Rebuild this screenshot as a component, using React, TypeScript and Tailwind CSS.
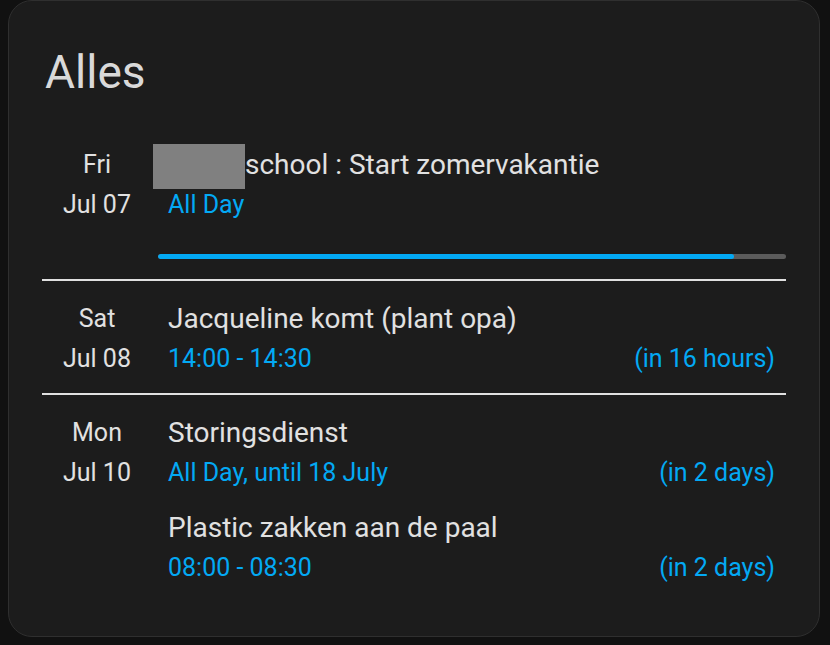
type CalEvent = {
  title: string;
  sub: string;
  rel?: string;
  redacted?: boolean;
  progress?: number;
};

type DayGroup = {
  dow: string;
  date: string;
  events: CalEvent[];
};

const days: DayGroup[] = [
  {
    dow: 'Fri',
    date: 'Jul 07',
    events: [{ title: 'school : Start zomervakantie', sub: 'All Day', redacted: true, progress: 91.7 }],
  },
  {
    dow: 'Sat',
    date: 'Jul 08',
    events: [{ title: 'Jacqueline komt (plant opa)', sub: '14:00 - 14:30', rel: '(in 16 hours)' }],
  },
  {
    dow: 'Mon',
    date: 'Jul 10',
    events: [
      { title: 'Storingsdienst', sub: 'All Day, until 18 July', rel: '(in 2 days)' },
      { title: 'Plastic zakken aan de paal', sub: '08:00 - 08:30', rel: '(in 2 days)' },
    ],
  },
];

function EventItem({ ev }: { ev: CalEvent }) {
  return (
    <div>
      <div className="flex items-start pl-4 pr-[11px] text-[28px] leading-[40px] text-[#e1e1e1]">
        {ev.redacted && <span className="ml-[-15px] mt-[-1px] mb-[-4px] h-[45px] w-[92px] shrink-0 bg-[#808080]" />}
        <span className="whitespace-nowrap">{ev.title}</span>
      </div>
      <div className="flex justify-between pl-4 pr-[11px] text-[25px] leading-[40px] text-[#03a9f4]">
        <span>{ev.sub}</span>
        {ev.rel && <span>{ev.rel}</span>}
      </div>
      {ev.progress !== undefined && (
        <div className="mt-[29px] mb-[20px] ml-[6px] h-[5px] rounded-full bg-[#5b5b5b] overflow-hidden">
          <div className="h-full rounded-full bg-[#03a9f4]" style={{ width: `${ev.progress}%` }} />
        </div>
      )}
    </div>
  );
}

export default function App() {
  return (
    <div className="w-[830px] h-[645px] bg-[#111111] pl-2 pr-[10px] font-['Roboto',sans-serif]">
      <div className="h-[637px] rounded-[24px] border border-[#2f2f2f] bg-[#1c1c1c] pt-[48px] px-[33px]">
        <h1 className="ml-[3px] text-[46px] leading-[46px] text-[#d9d9d9]">Alles</h1>

        <div className="mt-[50px]">
          {days.map((day, i) => (
            <div key={day.date}>
              {i > 0 && <div className="h-[2px] bg-[#e0e0e0]" />}
              <div className={`flex ${i > 0 ? 'pt-[18px] pb-[14px]' : ''}`}>
                <div className="w-[110px] shrink-0 text-center text-[25px] leading-[40px] text-[#e1e1e1]">
                  <div>{day.dow}</div>
                  <div>{day.date}</div>
                </div>
                <div className="flex-1 flex flex-col gap-[15px]">
                  {day.events.map((ev) => (
                    <EventItem key={ev.title} ev={ev} />
                  ))}
                </div>
              </div>
            </div>
          ))}
        </div>
      </div>
    </div>
  );
}
